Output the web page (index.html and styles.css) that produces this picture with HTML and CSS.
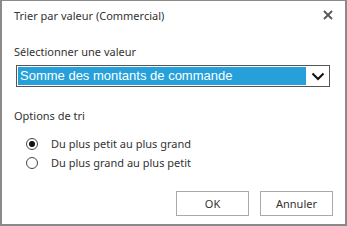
FILE: index.html
```html
<!DOCTYPE html>
<html lang="fr">
<head>
  <meta charset="UTF-8">
  <title>Trier par valeur</title>
  <link rel="stylesheet" href="styles.css">
</head>
<body>

<div class="dialog">
  <div class="dialog-header">
    <span class="dialog-title">Trier par valeur (Commercial)</span>
    <svg class="close" width="10" height="10" viewBox="0 0 10 10">
      <path d="M1 1 L9 9 M9 1 L1 9" stroke="#555" stroke-width="1.8" fill="none"/>
    </svg>
  </div>

  <div class="dialog-body">
    <div class="field-label">Sélectionner une valeur</div>
    <div class="dropdown">
      <span class="dropdown-value">Somme des montants de commande</span>
      <svg class="chevron" width="14" height="9" viewBox="0 0 14 9">
        <path d="M1.5 1.5 L7 7 L12.5 1.5" stroke="#111" stroke-width="2" fill="none"/>
      </svg>
    </div>

    <div class="field-label options">Options de tri</div>
    <ul class="radios">
      <li><span class="radio checked"></span>Du plus petit au plus grand</li>
      <li><span class="radio"></span>Du plus grand au plus petit</li>
    </ul>
  </div>

  <div class="dialog-footer">
    <button>OK</button>
    <button>Annuler</button>
  </div>
</div>

</body>
</html>
```

FILE: styles.css
```css
body {
  margin: 0;
  padding: 0;
  background: #fff;
  font-family: "Noto Sans", "Open Sans", sans-serif;
  color: #333;
}
.dialog {
  width: 347px;
  height: 226px;
  box-sizing: border-box;
  border: 1px solid #8a8a8a;
  border-left-width: 2px;
  border-right-width: 2px;
  border-bottom-width: 2px;
  display: flex;
  flex-direction: column;
}
.dialog-header {
  display: flex;
  justify-content: space-between;
  align-items: center;
  padding: 4px 12px 0 12px;
  height: 20px;
}
.dialog-title {
  font-size: 11px;
  color: #333;
}
.close {
  margin-top: -1px;
}
.dialog-body {
  padding: 2px 15px 0 12px;
}
.field-label {
  font-size: 11px;
  margin-top: 17px;
  line-height: 16px;
}
.dropdown {
  margin-top: 5px;
  height: 18px;
  border: 1px solid #555;
  padding: 1px;
  display: flex;
  align-items: center;
  margin-left: 2px;
}
.dropdown-value {
  flex: 1;
  background: #26a0da;
  color: #fff;
  font-family: "Liberation Sans", Arial, sans-serif;
  font-size: 13px;
  line-height: 18px;
  padding-left: 2px;
}
.chevron {
  margin: 0 3px 0 5px;
}
.options {
  margin-top: 21px;
}
.radios {
  list-style: none;
  margin: 10px 0 0 12px;
  padding: 0;
}
.radios li {
  display: flex;
  align-items: center;
  font-size: 11px;
  height: 19px;
}
.radio {
  width: 12px;
  height: 12px;
  border: 1px solid #444;
  border-radius: 50%;
  box-sizing: border-box;
  margin-right: 13px;
  position: relative;
}
.radio.checked::after {
  content: "";
  position: absolute;
  left: 2px;
  top: 2px;
  width: 6px;
  height: 6px;
  border-radius: 50%;
  background: #111;
}
.dialog-footer {
  margin-top: auto;
  display: flex;
  justify-content: flex-end;
  gap: 11px;
  padding: 0 12px 8px 0;
}
.dialog-footer button {
  width: 73px;
  height: 25px;
  background: #fff;
  border: 1px solid #aaa;
  font-family: "Noto Sans", "Open Sans", sans-serif;
  font-size: 11px;
  color: #333;
  padding: 0;
}
```
